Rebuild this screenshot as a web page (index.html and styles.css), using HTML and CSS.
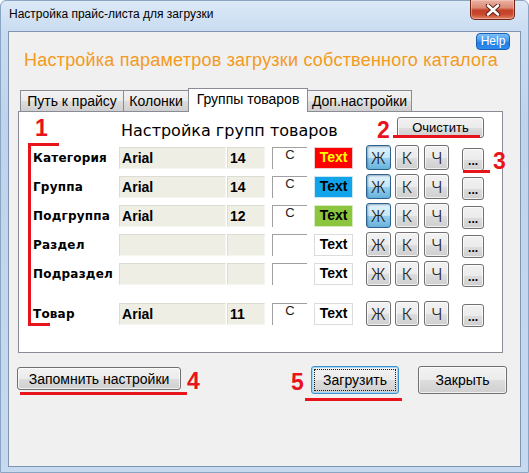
FILE: index.html
```html
<!DOCTYPE html>
<html lang="ru">
<head>
<meta charset="utf-8">
<title>Настройка прайс-листа для загрузки</title>
<link rel="stylesheet" href="styles.css">
</head>
<body>
<div class="window">
  <div class="titlebar">
    <span class="title">Настройка прайс-листа для загрузки</span>
    <button class="close" aria-label="Закрыть">
      <svg width="16" height="12" viewBox="0 0 16 12">
        <path d="M3 1.5 L13 10.5 M13 1.5 L3 10.5" stroke="#5a1a10" stroke-width="4.4" stroke-linecap="round"/>
        <path d="M3 1.5 L13 10.5 M13 1.5 L3 10.5" stroke="#ffffff" stroke-width="2.6" stroke-linecap="round"/>
      </svg>
    </button>
  </div>
  <div class="client">
    <div class="help-row"><button class="help">Help</button></div>
    <h1 class="heading">Настройка параметров загрузки собственного каталога</h1>
    <div class="tabs">
      <div class="tab tab-path">Путь к прайсу</div>
      <div class="tab tab-cols">Колонки</div>
      <div class="tab tab-groups active">Группы товаров</div>
      <div class="tab tab-extra">Доп.настройки</div>
    </div>
    <div class="panel">
      <div class="panel-head">
        <h2 class="panel-title">Настройка групп товаров</h2>
        <button class="btn btn-clear">Очистить</button>
      </div>
      <div class="rows">
        <div class="row">
          <span class="label">Категория</span>
          <span class="field font">Arial</span>
          <span class="field size">14</span>
          <span class="cfield">C</span>
          <span class="swatch red">Text</span>
          <button class="sq first pressed">Ж</button>
          <button class="sq">К</button>
          <button class="sq last">Ч</button>
          <button class="dots">...</button>
        </div>
        <div class="row">
          <span class="label">Группа</span>
          <span class="field font">Arial</span>
          <span class="field size">14</span>
          <span class="cfield">C</span>
          <span class="swatch blue">Text</span>
          <button class="sq first pressed">Ж</button>
          <button class="sq">К</button>
          <button class="sq last">Ч</button>
          <button class="dots">...</button>
        </div>
        <div class="row">
          <span class="label">Подгруппа</span>
          <span class="field font">Arial</span>
          <span class="field size">12</span>
          <span class="cfield">C</span>
          <span class="swatch green">Text</span>
          <button class="sq first pressed">Ж</button>
          <button class="sq">К</button>
          <button class="sq last">Ч</button>
          <button class="dots">...</button>
        </div>
        <div class="row">
          <span class="label">Раздел</span>
          <span class="field font"></span>
          <span class="field size"></span>
          <span class="cfield"></span>
          <span class="swatch">Text</span>
          <button class="sq first">Ж</button>
          <button class="sq">К</button>
          <button class="sq last">Ч</button>
          <button class="dots">...</button>
        </div>
        <div class="row">
          <span class="label">Подраздел</span>
          <span class="field font"></span>
          <span class="field size"></span>
          <span class="cfield"></span>
          <span class="swatch">Text</span>
          <button class="sq first">Ж</button>
          <button class="sq">К</button>
          <button class="sq last">Ч</button>
          <button class="dots">...</button>
        </div>
        <div class="row row-item">
          <span class="label">Товар</span>
          <span class="field font">Arial</span>
          <span class="field size">11</span>
          <span class="cfield">C</span>
          <span class="swatch">Text</span>
          <button class="sq first">Ж</button>
          <button class="sq">К</button>
          <button class="sq last">Ч</button>
          <button class="dots">...</button>
        </div>
      </div>
    </div>
    <div class="footer">
      <button class="btn btn-save">Запомнить настройки</button>
      <button class="btn btn-load">Загрузить</button>
      <button class="btn btn-close">Закрыть</button>
    </div>
  </div>

  <div class="marks">
    <span class="num n1">1</span>
    <span class="bar b1-v"></span>
    <span class="bar b1-top"></span>
    <span class="bar b1-bottom"></span>
    <span class="num n2">2</span>
    <span class="bar b2"></span>
    <span class="num n3">3</span>
    <span class="bar b3"></span>
    <span class="num n4">4</span>
    <span class="bar b4"></span>
    <span class="num n5">5</span>
    <span class="bar b5"></span>
  </div>
</div>
</body>
</html>
```

FILE: styles.css
```css
* { box-sizing: border-box; }

html, body {
  margin: 0;
  padding: 0;
  background: #ffffff;
}

body {
  width: 529px;
  height: 473px;
  overflow: hidden;
  font-family: "Liberation Sans", Arial, sans-serif;
  color: #000;
}

button {
  font-family: inherit;
  padding: 0;
  margin: 0;
  cursor: default;
}

.window {
  position: relative;
  width: 529px;
  height: 473px;
  border: 1px solid #8aa4c4;
  border-radius: 6px 6px 0 0;
  background: linear-gradient(#dce9f7 0px, #c9dcf1 30px, #bfd4ec 120px, #c6d9ef 100%);
  padding: 0 7px 5px 7px;
  display: flex;
  flex-direction: column;
}

/* Title bar */
.titlebar {
  height: 30px;
  display: flex;
  align-items: flex-start;
}

.title {
  padding: 6px 0 0 1px;
  font-size: 12px;
  line-height: 14px;
  color: #000;
}

.close {
  margin: -1px 6px 0 auto;
  width: 45px;
  height: 20px;
  border: 1px solid #6e2416;
  border-top: none;
  border-radius: 0 0 5px 5px;
  background: linear-gradient(#eab3a6 0%, #dc8a74 40%, #c2412a 55%, #c9472c 75%, #e08668 100%);
  box-shadow: inset 0 0 0 1px rgba(255, 210, 200, 0.45);
  display: flex;
  align-items: center;
  justify-content: center;
}

/* Client area */
.client {
  height: 436px;
  background: #f0f0f0;
  border: 1px solid #7f95b2;
  display: flex;
  flex-direction: column;
}

.help-row {
  display: flex;
  justify-content: flex-end;
  margin-top: 1px;
  padding-right: 10px;
}

.help {
  width: 34px;
  height: 17px;
  border: 1px solid #1b5eb4;
  border-radius: 4px;
  background: linear-gradient(#7cc1f8 0%, #3c95ec 50%, #1f7be0 51%, #2b8cf0 100%);
  color: #fff;
  font-size: 12px;
  line-height: 15px;
}

.heading {
  margin: -1px 0 0 0;
  padding-left: 15px;
  font-size: 18px;
  letter-spacing: 0.22px;
  line-height: 22px;
  font-weight: normal;
  color: #f39a21;
  white-space: nowrap;
}

/* Tabs */
.tabs {
  margin: 17px 0 0 11px;
  height: 23px;
  display: flex;
  align-items: flex-end;
}

.tab {
  height: 21px;
  border: 1px solid #898c95;
  border-bottom: none;
  background: linear-gradient(#f3f3f3 0%, #ebebeb 50%, #dddddd 51%, #cfcfcf 100%);
  font-size: 14px;
  line-height: 19px;
  text-align: center;
  white-space: nowrap;
  padding-top: 1px;
}

.tab + .tab { margin-left: -1px; }

.tab-path { width: 104px; }
.tab-cols { width: 66px; }
.tab-groups { width: 120px; }
.tab-extra { width: 105px; }

.tab.active {
  position: relative;
  z-index: 1;
  height: 24px;
  margin-bottom: -1px;
  background: #ffffff;
  padding-top: 0;
  line-height: 20px;
}

/* Panel */
.panel {
  margin-left: 9px;
  width: 485px;
  height: 242px;
  border: 1px solid #898c95;
  background: #ffffff;
  padding: 5px 18px 0 14px;
}

.panel-head {
  height: 26px;
  display: flex;
  align-items: flex-start;
}

.panel-title {
  margin: 4px 0 0 88px;
  font-family: "DejaVu Sans", Verdana, sans-serif;
  font-size: 16px;
  line-height: 20px;
  font-weight: normal;
}

.btn {
  border: 1px solid #707070;
  border-radius: 3px;
  background: linear-gradient(#f2f2f2 0%, #ebebeb 50%, #dddddd 51%, #cfcfcf 100%);
  box-shadow: inset 0 0 0 1px rgba(255, 255, 255, 0.7);
  color: #000;
  font-size: 14px;
}

.btn-clear {
  margin-left: auto;
  width: 87px;
  height: 21px;
  font-size: 13px;
  line-height: 18px;
}

/* Rows */
.row {
  height: 29px;
  display: flex;
  align-items: center;
}

.row-item { margin-top: 11px; }

.label {
  width: 87px;
  font-family: "DejaVu Sans", Verdana, sans-serif;
  font-size: 12px;
  font-weight: bold;
  letter-spacing: 0.2px;
  white-space: nowrap;
}

.field {
  height: 22px;
  background: #eeeee4;
  border: 1px solid #dcdcd2;
  border-bottom-color: #f6f6f0;
  border-right-color: #f6f6f0;
  font-size: 14px;
  font-weight: bold;
  line-height: 20px;
  padding-left: 2px;
}

.font { width: 108px; }
.size { width: 38px; margin-left: 1px; }

.cfield {
  width: 36px;
  height: 22px;
  margin-left: 7px;
  background: #ffffff;
  border-top: 1px solid #a0a0a0;
  border-left: 1px solid #a0a0a0;
  text-align: center;
  font-size: 13px;
  line-height: 14px;
  color: #222;
}

.swatch {
  width: 39px;
  height: 22px;
  margin-left: 7px;
  border: 1px solid #dcdcdc;
  background: #ffffff;
  font-size: 14px;
  font-weight: bold;
  line-height: 19px;
  text-align: center;
}

.swatch.red { background: #ff0000; color: #ffff00; border-color: #f3c9c9; }
.swatch.blue { background: #12a4ea; color: #000; border-color: #c8e6f6; }
.swatch.green { background: #8cc63f; color: #000; border-color: #d6ebc0; }

.sq {
  width: 25px;
  height: 25px;
  margin-left: 5px;
  border: 1px solid #707070;
  border-radius: 3px;
  background: linear-gradient(#f2f2f2 0%, #ebebeb 50%, #dddddd 51%, #cfcfcf 100%);
  box-shadow: inset 0 0 0 1px rgba(255, 255, 255, 0.7);
  color: #222;
  font-family: Inter, "Liberation Sans", sans-serif;
  font-weight: 300;
  font-size: 16px;
  line-height: 22px;
}

.sq.first { margin-left: 13px; }
.sq + .sq { margin-left: 4px; }
.sq.last { margin-left: 5px; }

.sq.pressed {
  border-color: #2c628b;
  background: linear-gradient(#e5f4fc 0%, #c4e5f6 50%, #98d1ef 51%, #68b3db 100%);
  box-shadow: inset 1px 1px 2px rgba(0, 40, 80, 0.35);
}

.dots {
  width: 22px;
  height: 23px;
  margin: 4px 0 0 13px;
  border: 1px solid #707070;
  border-radius: 3px;
  background: linear-gradient(#f2f2f2 0%, #ebebeb 50%, #dddddd 51%, #cfcfcf 100%);
  box-shadow: inset 0 0 0 1px rgba(255, 255, 255, 0.7);
  font-size: 12px;
  font-weight: bold;
  line-height: 16px;
  padding-top: 2px;
}

/* Footer */
.footer {
  margin-top: 13px;
  height: 28px;
  display: flex;
  align-items: flex-start;
  padding: 0 13px 0 8px;
}

.btn-save {
  width: 164px;
  height: 23px;
  margin-top: 1px;
  line-height: 20px;
}

.btn-load {
  margin-left: auto;
  width: 88px;
  height: 28px;
  border-color: #3c8fd0;
  box-shadow: inset 0 0 0 1px #9fd6f6;
  outline: 1px dotted #1a1a1a;
  outline-offset: -4px;
}

.btn-close {
  margin-left: 19px;
  width: 89px;
  height: 28px;
}

/* Annotations drawn over the dialog */
.marks {
  position: absolute;
  inset: -1px;
  pointer-events: none;
}

.num {
  position: absolute;
  color: #e8141b;
  font-weight: bold;
  font-size: 23px;
  line-height: 23px;
}

.bar {
  position: absolute;
  background: #e8141b;
}

.n1 { left: 35px; top: 117px; }
.b1-v { left: 28px; top: 143px; width: 3px; height: 183px; }
.b1-top { left: 28px; top: 143px; width: 31px; height: 3px; }
.b1-bottom { left: 28px; top: 323px; width: 22px; height: 3px; }

.n2 { left: 377px; top: 119px; }
.b2 { left: 393px; top: 135px; width: 87px; height: 3px; }

.n3 { left: 493px; top: 150px; }
.b3 { left: 463px; top: 170px; width: 27px; height: 3px; }

.n4 { left: 187px; top: 370px; }
.b4 { left: 20px; top: 392px; width: 167px; height: 3px; }

.n5 { left: 291px; top: 371px; }
.b5 { left: 305px; top: 398px; width: 97px; height: 3px; }
```
